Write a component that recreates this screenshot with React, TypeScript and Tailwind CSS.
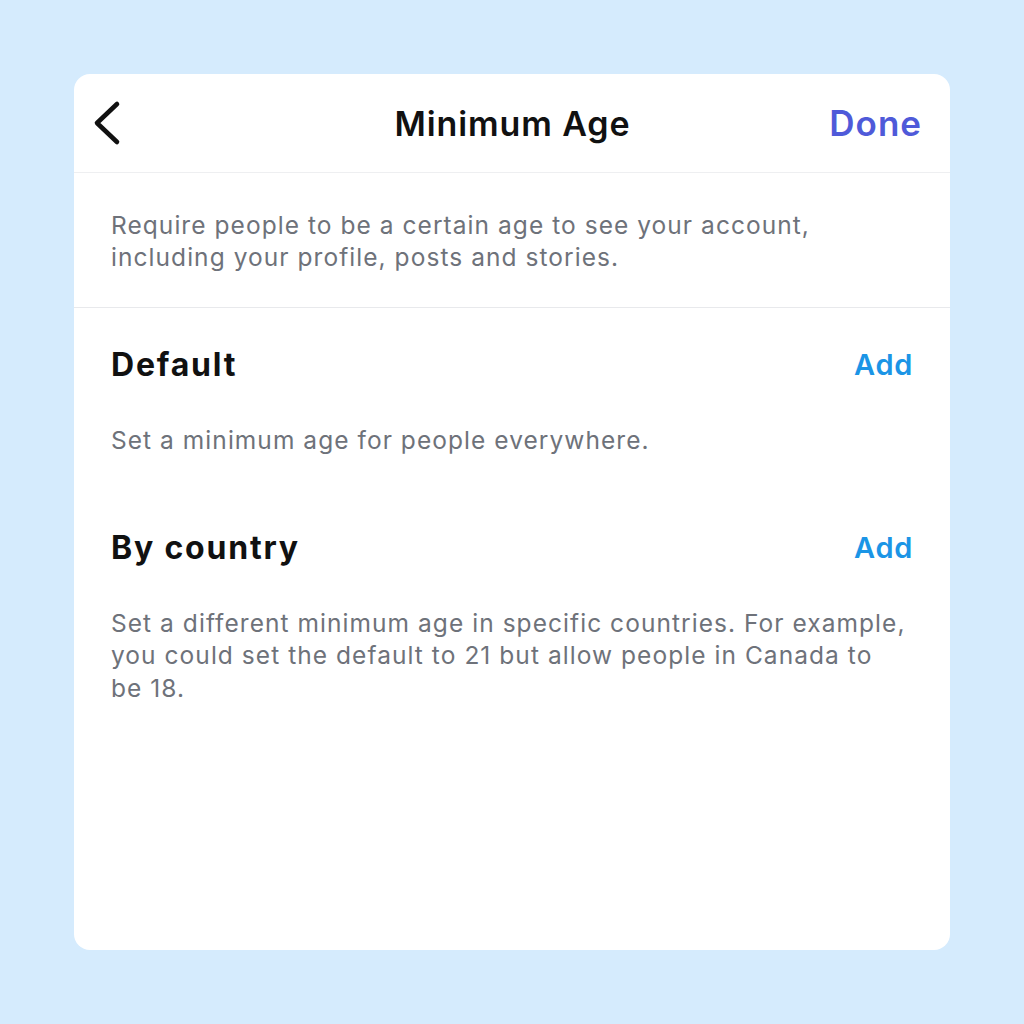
const sections = [
  {
    title: "Default",
    lines: ["Set a minimum age for people everywhere."],
  },
  {
    title: "By country",
    lines: [
      "Set a different minimum age in specific countries. For example,",
      "you could set the default to 21 but allow people in Canada to",
      "be 18.",
    ],
  },
];

const BackChevron = () => (
  <svg width="30" height="46" viewBox="0 0 30 46" fill="none">
    <path
      d="M25 4 L5 23 L25 42"
      stroke="#111"
      strokeWidth="4.6"
      strokeLinecap="round"
      strokeLinejoin="round"
    />
  </svg>
);

const App = () => {
  return (
    <div
      className="w-[1024px] h-[1024px] bg-[#d5ebfd] flex items-center justify-center"
      style={{ fontFamily: "Inter, 'Noto Sans', sans-serif" }}
    >
      <div className="w-[876px] h-[876px] bg-white rounded-[16px] flex flex-col">
        {/* header */}
        <div className="h-[99px] grid grid-cols-[1fr_auto_1fr] items-center px-[28px] border-b border-[#eeeff1]">
          <div className="flex items-center -ml-[10px]">
            <BackChevron />
          </div>
          <h1 className="text-[34px] font-semibold text-[#111] tracking-[0.9px] pl-[1px]">
            Minimum Age
          </h1>
          <div className="flex justify-end">
            <button className="text-[35px] font-semibold text-[#4f5ad9] tracking-[1px] leading-none">
              Done
            </button>
          </div>
        </div>

        <div className="px-[37px] pt-[36px] pb-[34px] border-b border-[#e8e9ec]">
          <p className="text-[24.5px] leading-[32px] text-[#6e727a] tracking-[1.05px] whitespace-nowrap">
            Require people to be a certain age to see your account,
            <br />
            including your profile, posts and stories.
          </p>
        </div>

        <div className="px-[37px] pt-[37px] flex flex-col">
          {sections.map((s, i) => (
            <div key={s.title} className={i > 0 ? "mt-[71px]" : ""}>
              <div className="flex items-center justify-between h-[40px]">
                <h2 className="text-[32px] font-bold text-[#111] tracking-[1.8px]">
                  {s.title}
                </h2>
                <button className="text-[29px] font-semibold text-[#1b95e6] tracking-[0.7px]">
                  Add
                </button>
              </div>
              <p className="mt-[39px] text-[24.5px] leading-[32.5px] text-[#6e727a] tracking-[1.05px] whitespace-nowrap">
                {s.lines.map((l, j) => (
                  <span key={j}>
                    {l}
                    {j < s.lines.length - 1 && <br />}
                  </span>
                ))}
              </p>
            </div>
          ))}
        </div>
      </div>
    </div>
  );
};

export default App;
